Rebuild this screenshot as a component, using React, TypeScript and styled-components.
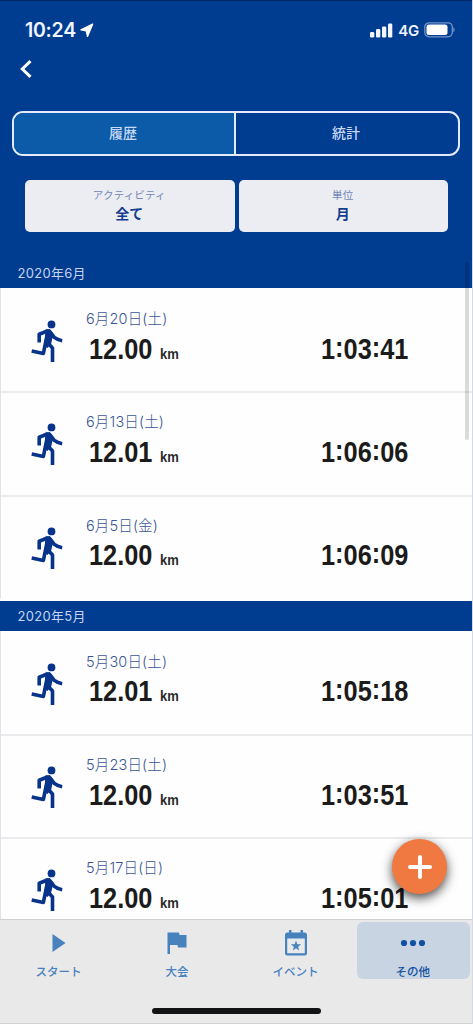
import React from 'react';
import styled, { createGlobalStyle } from 'styled-components';

const GlobalStyle = createGlobalStyle`
  * { box-sizing: border-box; }
  body { margin: 0; background: #003c90; }
`;

const Screen = styled.div`
  position: relative;
  display: flex;
  flex-direction: column;
  width: 473px;
  height: 1024px;
  overflow: hidden;
  background: #fefefe;
  font-family: 'Noto Sans CJK JP', sans-serif;
  border-right: 1px solid #d5d9e4;
`;

const Header = styled.header`
  flex: none;
  height: 258px;
  background: #003c90;
  border-top: 1px solid #032763;
`;

const StatusBar = styled.div`
  display: flex;
  align-items: center;
  height: 46px;
  padding: 12px 17px 0 25px;
`;

const Clock = styled.div`
  color: #f2f5ff;
  font: 600 19.5px/24px Inter, sans-serif;
  letter-spacing: -0.25px;
  margin-right: 4px;
`;

const Indicators = styled.div`
  display: flex;
  align-items: center;
  margin-left: auto;
`;

const Network = styled.span`
  color: #eef2ff;
  font: 600 15px/20px Inter, sans-serif;
  letter-spacing: -0.3px;
  margin: 1px 5px 0 5px;
`;

const BackRow = styled.div`
  display: flex;
  height: 64px;
  padding: 13px 0 0 20px;
`;

const Segments = styled.div`
  display: flex;
  width: 448px;
  height: 45px;
  margin-left: 12px;
  border: 2px solid #e4ebff;
  border-radius: 11px;
  overflow: hidden;
`;

const Segment = styled.div<{ $active?: boolean }>`
  display: flex;
  flex: ${p => (p.$active ? '0 0 222px' : '1')};
  align-items: center;
  justify-content: center;
  padding: 0 2px 3px 0;
  border-right: ${p => (p.$active ? '2px solid #e4ebff' : '0')};
  background: ${p => (p.$active ? '#0b5ba9' : 'transparent')};
  color: #c9d8f5;
  font-size: 14px;
  font-weight: 500;
`;

const Filters = styled.div`
  display: flex;
  gap: 4px;
  padding: 24px 24px 0 25px;
`;

const Filter = styled.div`
  display: flex;
  flex: 1;
  flex-direction: column;
  align-items: center;
  height: 52px;
  padding: 6px 1px 0 0;
  border-radius: 5px;
  background: #ebedf2;
`;

const FilterLabel = styled.span`
  height: 17px;
  color: #7287b5;
  font-size: 10.5px;
  line-height: 17px;
  letter-spacing: 0.15px;
`;

const FilterValue = styled.span`
  color: #153d8d;
  font-size: 14px;
  font-weight: 700;
  line-height: 20px;
`;

const History = styled.main`
  flex: 1;
  min-height: 0;
  overflow: hidden;
`;

const Month = styled.section`
  margin-bottom: 2.6px;
`;

const MonthTitle = styled.h2`
  margin: 0;
  height: 30px;
  padding-left: 17.5px;
  background: #003c90;
  color: #c6d3f2;
  font: 400 13px/30px Inter, 'Noto Sans CJK JP', sans-serif;
  letter-spacing: 0.3px;
`;

const Row = styled.article`
  display: flex;
  height: 103.35px;
  border-left: 1px solid #dfe2ea;
  &:not(:first-of-type) {
    box-shadow: inset 0 2px #ebebed;
  }
`;

const RunnerSlot = styled.div`
  width: 85px;
  padding: 22px 0 0 19px;
`;

const Distance = styled.div`
  width: 235px;
`;

const RunDate = styled.div`
  height: 22px;
  margin-top: 19px;
  padding-top: 1px;
  color: #3b5598;
  font: 300 14.5px/22px Inter, 'Noto Sans CJK JP', sans-serif;
  letter-spacing: 0.15px;
`;

const Figure = styled.span<{ $width: number }>`
  display: inline-block;
  width: ${p => p.$width}px;
  color: #1b1b1b;
  font: 700 30px/36px 'Liberation Sans', sans-serif;
  white-space: nowrap;
  transform: scaleX(0.845);
  transform-origin: left;
`;

const Colon = styled.span`
  vertical-align: 2px;
  line-height: 0;
`;

const DistanceLine = styled.div`
  display: flex;
  align-items: baseline;
  padding: 1.7px 0 0 2.8px;
`;

const Unit = styled.span`
  color: #2b2b2b;
  font: 700 15.5px/20px 'Liberation Sans', sans-serif;
  transform: scaleX(0.84);
  transform-origin: left;
`;

const Time = styled.div`
  padding-top: 42.7px;
`;

const TabBar = styled.nav`
  display: flex;
  flex: none;
  height: 105px;
  padding-top: 2px;
  border-top: 1px solid #cfd0d2;
  border-bottom: 1px solid #d2d2d3;
  background: #e9e9ea;
`;

const Tab = styled.div<{ $active?: boolean }>`
  display: flex;
  flex-direction: column;
  align-items: center;
  width: ${p => (p.$active ? '113px' : '118.5px')};
  height: 57px;
  padding: 1px 1.5px 0 0;
  margin-left: ${p => (p.$active ? '1.5px' : '0')};
  border-radius: 6px;
  background: ${p => (p.$active ? '#c8d4e1' : 'transparent')};
  color: ${p => (p.$active ? '#1150a2' : '#4782bd')};
`;

const TabIcon = styled.div`
  display: flex;
  flex: none;
  align-items: center;
  justify-content: center;
  height: 40px;
`;

const TabLabel = styled.span`
  margin-top: -2px;
  font-size: 11.5px;
  font-weight: 500;
  line-height: 20px;
`;

const ScrollThumb = styled.div`
  position: absolute;
  left: 465px;
  top: 262px;
  width: 4px;
  height: 178px;
  border-radius: 2px;
  background: rgba(0, 0, 0, 0.14);
`;

const AddButton = styled.button`
  position: absolute;
  left: 392px;
  top: 839px;
  display: flex;
  align-items: center;
  justify-content: center;
  width: 55px;
  height: 55px;
  padding: 0;
  border: 0;
  border-radius: 50%;
  background: #f07841;
  box-shadow: 0 4px 11px rgba(0, 0, 0, 0.7);
`;

const HomeIndicator = styled.div`
  position: absolute;
  left: 152px;
  top: 1008px;
  width: 169px;
  height: 6px;
  border-radius: 3px;
  background: #121314;
`;

const Runner = () => (
  <svg width="60" height="60" viewBox="0 0 60 60" fill="none" stroke="#07338b" strokeWidth="3.600" strokeLinejoin="round">
    <circle cx="31.500" cy="14.400" r="3.900" fill="#07338b" stroke="none" />
    <path d="M19.200 32.500V24.200L28 20.800" />
    <path d="M29.500 21.500 34.300 27.400Q37.500 30 42.200 30.700" />
    <path d="M27 32 32.500 38V52" />
    <path d="M27.500 23 23.400 43.400 11.700 41" />
    <path d="M25.500 19.600 29.800 18.900 33.400 23.500 31.200 33.500 27.500 38 24.500 36z" fill="#07338b" stroke="none" />
  </svg>
);

const LocationArrow = () => (
  <svg width="14" height="15" viewBox="0 0 14 15" fill="#fff" stroke="#fff" strokeWidth="1.300" strokeLinejoin="round">
    <path d="M12.600 1.200.900 6.800l5.300 1 1.300 5.600z" />
  </svg>
);

const Signal = () => (
  <svg width="23" height="15" viewBox="0 0 23 15" fill="#f4f6ff">
    <rect x="0" y="9" width="4.300" height="5.500" rx="1.300" />
    <rect x="6" y="6" width="4.300" height="8.500" rx="1.300" />
    <rect x="12" y="3.500" width="4.300" height="11" rx="1.300" />
    <rect x="18" y="0.500" width="4.300" height="14" rx="1.300" />
  </svg>
);

const Battery = () => (
  <svg width="31" height="16" viewBox="0 0 31 16">
    <rect x="0.800" y="0.800" width="27.500" height="14" rx="4.200" fill="none" stroke="#7493c9" strokeWidth="1.300" />
    <rect x="2.500" y="2.500" width="21" height="10.600" rx="2.500" fill="#fff" />
    <path d="M29.300 5q2.800 2.800 0 5.600z" fill="#7493c9" />
  </svg>
);

const icons = {
  play: (
    <svg width="14" height="18" viewBox="0 0 14 18" fill="currentColor">
      <path d="M0.500 0 13.500 9 0.500 18z" />
    </svg>
  ),
  flag: (
    <svg width="20" height="22" viewBox="0 0 20 22" fill="currentColor">
      <path d="M.5.500H12l.5 2.500H19.500V15.500H11l-.5-2.500H3V22H.5z" />
    </svg>
  ),
  event: (
    <svg width="24" height="26" viewBox="0 0 24 26" fill="currentColor">
      <path
        fillRule="evenodd"
        d="M5 0h2.500v2.500h9V0H19v2.500h1.500q2.500 0 2.500 2.500v18q0 2.500-2.500 2.500h-17Q1 25.500 1 23V5q0-2.500 2.500-2.500H5zM3.200 8.500v14.800h17.600V8.500z"
      />
      <path d="M12 10.500l1.300 3.700 3.900.1-3.100 2.400 1.100 3.700L12 18.200l-3.200 2.200 1.100-3.700-3.100-2.400 3.900-.1z" />
    </svg>
  ),
  more: (
    <svg width="26" height="8" viewBox="0 0 26 8" fill="currentColor">
      <circle cx="4" cy="4" r="3.100" />
      <circle cx="13" cy="4" r="3.100" />
      <circle cx="22" cy="4" r="3.100" />
    </svg>
  ),
};

type Run = { date: string; km: string; time: string };

const months: { title: string; runs: Run[] }[] = [
  {
    title: '2020年6月',
    runs: [
      { date: '6月20日(土)', km: '12.00', time: '1:03:41' },
      { date: '6月13日(土)', km: '12.01', time: '1:06:06' },
      { date: '6月5日(金)', km: '12.00', time: '1:06:09' },
    ],
  },
  {
    title: '2020年5月',
    runs: [
      { date: '5月30日(土)', km: '12.01', time: '1:05:18' },
      { date: '5月23日(土)', km: '12.00', time: '1:03:51' },
      { date: '5月17日(日)', km: '12.00', time: '1:05:01' },
    ],
  },
];

const tabs: { icon: keyof typeof icons; label: string; active?: boolean }[] = [
  { icon: 'play', label: 'スタート' },
  { icon: 'flag', label: '大会' },
  { icon: 'event', label: 'イベント' },
  { icon: 'more', label: 'その他', active: true },
];

export default function App() {
  return (
    <>
      <GlobalStyle />
      <Screen>
        <Header>
          <StatusBar>
            <Clock>10:24</Clock>
            <LocationArrow />
            <Indicators>
              <Signal />
              <Network>4G</Network>
              <Battery />
            </Indicators>
          </StatusBar>
          <BackRow>
            <svg width="13" height="20" viewBox="0 0 13 20" fill="none" stroke="#fff" strokeWidth="3">
              <path d="M10.500 1.200 2.300 9l8.200 7.800" />
            </svg>
          </BackRow>
          <Segments>
            <Segment $active>履歴</Segment>
            <Segment>統計</Segment>
          </Segments>
          <Filters>
            <Filter>
              <FilterLabel>アクティビティ</FilterLabel>
              <FilterValue>全て</FilterValue>
            </Filter>
            <Filter>
              <FilterLabel>単位</FilterLabel>
              <FilterValue>月</FilterValue>
            </Filter>
          </Filters>
        </Header>
        <History>
          {months.map(month => (
            <Month key={month.title}>
              <MonthTitle>{month.title}</MonthTitle>
              {month.runs.map(run => (
                <Row key={run.date}>
                  <RunnerSlot>
                    <Runner />
                  </RunnerSlot>
                  <Distance>
                    <RunDate>{run.date}</RunDate>
                    <DistanceLine>
                      <Figure $width={71.5}>{run.km}</Figure>
                      <Unit>km</Unit>
                    </DistanceLine>
                  </Distance>
                  <Time>
                    <Figure $width={88}>
                      {run.time.split(':').map((part, i) => (
                        <React.Fragment key={i}>
                          {i > 0 && <Colon>:</Colon>}
                          {part}
                        </React.Fragment>
                      ))}
                    </Figure>
                  </Time>
                </Row>
              ))}
            </Month>
          ))}
        </History>
        <TabBar>
          {tabs.map(tab => (
            <Tab key={tab.label} $active={tab.active}>
              <TabIcon>{icons[tab.icon]}</TabIcon>
              <TabLabel>{tab.label}</TabLabel>
            </Tab>
          ))}
        </TabBar>
        <ScrollThumb />
        <AddButton aria-label="追加">
          <svg width="24" height="24" viewBox="0 0 24 24" stroke="#fff" strokeWidth="4" strokeLinecap="round">
            <path d="M12 2v20M2 12h20" />
          </svg>
        </AddButton>
        <HomeIndicator />
      </Screen>
    </>
  );
}
